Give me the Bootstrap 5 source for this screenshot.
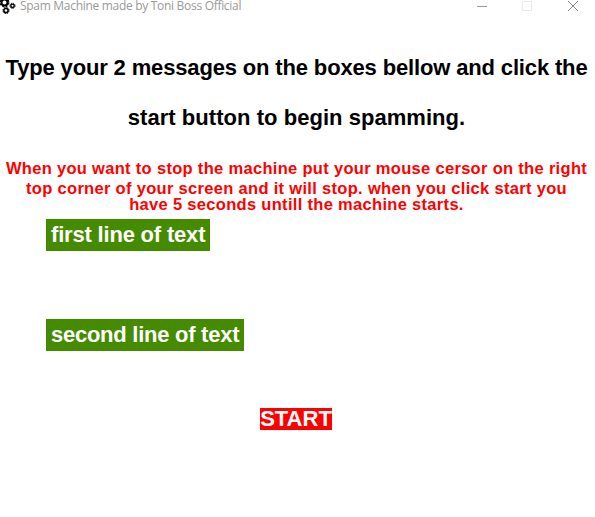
<!DOCTYPE html>
<html lang="en">
<head>
<meta charset="utf-8">
<title>Spam Machine made by Toni Boss Official</title>
<link href="https://cdn.jsdelivr.net/npm/bootstrap@5.3.0/dist/css/bootstrap.min.css" rel="stylesheet">
<script src="https://cdn.jsdelivr.net/npm/bootstrap@5.3.0/dist/js/bootstrap.bundle.min.js"></script>
<style>
body{font-family:"Liberation Sans",Arial,sans-serif;font-weight:700;height:517px;overflow:hidden;background:#fff}
.titlebar{height:14px;font:400 12px/14px "Open Sans","Noto Sans",sans-serif;color:#999}
.app-icon{width:16px;height:14px}
.app-title{margin-left:4px;margin-top:-1px;letter-spacing:-.3px}
.controls{margin-right:16px}
.headline{margin:29px 0 0;padding-right:2px;font-size:22px;line-height:50px;font-weight:700;color:#000}
.h-a{letter-spacing:-.15px}.h-b{letter-spacing:.04px}
.notice{margin-top:15px;padding-right:2px;font-size:16.5px;color:#f00;letter-spacing:.31px;line-height:20px}
.notice span{display:block}
.notice .n3{line-height:13px}
.entry{width:164px;height:32px;margin-left:46px;padding-left:5px;font-size:22px;line-height:31px;letter-spacing:-.19px;background:#458b00;color:#fff}
.entry-second{width:198px;margin-top:68px;letter-spacing:-.26px}
.start{width:72px;height:22px;margin:57px 3px 0 0;font-size:22px;line-height:22px;background:#f00;color:#fff}
</style>
</head>
<body class="d-flex flex-column">
<header class="titlebar d-flex align-items-start flex-shrink-0">
<svg class="app-icon" viewBox="0 0 16 14" fill="none" stroke="#000"><circle cx="4.500" cy="2.500" r="3" stroke-width="2"/><circle cx="4.500" cy="2.500" r="4.300" stroke-width="1.300" stroke-dasharray="2 1.380"/><circle cx="12.500" cy="5.800" r="1.700" stroke-width="1.400"/><circle cx="12.500" cy="5.800" r="2.600" stroke-width="1" stroke-dasharray="1.200 .84"/><circle cx="6" cy="10.500" r="2.100" stroke-width="1.500"/><circle cx="6" cy="10.500" r="3.100" stroke-width="1" stroke-dasharray="1.400 1.030"/></svg>
<span class="app-title">Spam Machine made by Toni Boss Official</span>
<svg class="controls ms-auto" width="102" height="14" fill="none"><path d="M0 6.500h10" stroke="#999"/><path d="M45.500 1.500h9v9h-9z" stroke="#e8e8e8"/><path d="M91 1l10 10M101 1l-10 10" stroke="#888"/></svg>
</header>
<h1 class="headline text-center text-nowrap"><span class="h-a">Type your 2 messages on the boxes bellow and click the</span><br><span class="h-b">start button to begin spamming.</span></h1>
<div class="notice text-center text-nowrap"><span>When you want to stop the machine put your mouse cersor on the right</span><span>top corner of your screen and it will stop. when you click start you</span><span class="n3">have 5 seconds untill the machine starts.</span></div>
<div class="entry align-self-start text-nowrap mt-2">first line of text</div>
<div class="entry entry-second align-self-start text-nowrap">second line of text</div>
<div class="start align-self-center text-nowrap text-center">START</div>
</body>
</html>
